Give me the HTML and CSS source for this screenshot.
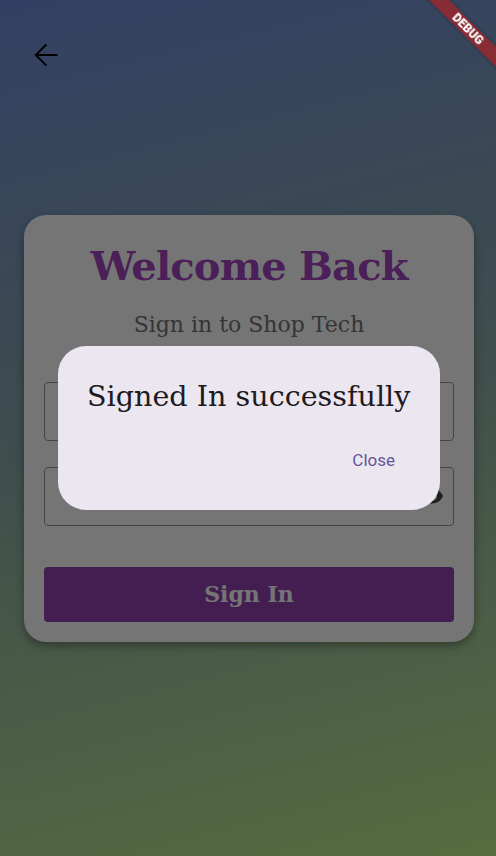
FILE: index.html
```html
<!DOCTYPE html>
<html lang="en">
<head>
<meta charset="utf-8">
<title>Sign In</title>
<link rel="stylesheet" href="styles.css">
</head>
<body>
<div class="screen">
  <header class="appbar">
    <button class="back" aria-label="Back">
      <svg width="24" height="24" viewBox="0 0 24 24" fill="none" stroke="#000" stroke-width="2" stroke-linecap="butt" stroke-linejoin="miter">
        <path d="M1.6 12H23.6"/>
        <path d="M12.4 1.4L1.8 12L12.4 22.6"/>
      </svg>
    </button>
  </header>
  <main class="center">
    <section class="card">
      <h1 class="title">Welcome Back</h1>
      <p class="subtitle">Sign in to Shop Tech</p>
      <div class="field field-email">
        <input class="field-input" type="email" aria-label="Email">
      </div>
      <div class="field field-password">
        <input class="field-input" type="password" aria-label="Password">
        <svg class="eye" width="24" height="24" viewBox="0 0 24 24" fill="#464646">
          <path d="M12 4.5C7 4.5 2.73 7.610 1 12c1.73 4.39 6 7.5 11 7.5s9.27-3.11 11-7.5c-1.73-4.39-6-7.5-11-7.5zM12 17c-2.76 0-5-2.24-5-5s2.24-5 5-5 5 2.24 5 5-2.24 5-5 5zm0-8c-1.66 0-3 1.34-3 3s1.34 3 3 3 3-1.34 3-3-1.34-3-3-3z"/>
        </svg>
      </div>
      <button class="signin">Sign In</button>
    </section>
  </main>
</div>

<div class="barrier">
  <div class="dialog" role="alertdialog">
    <h2 class="dialog-title">Signed In successfully</h2>
    <div class="dialog-actions">
      <button class="text-btn">Close</button>
    </div>
  </div>
</div>

<div class="debug-banner">DEBUG</div>
</body>
</html>
```

FILE: styles.css
```css
html, body {
  margin: 0;
  padding: 0;
}

body {
  width: 496px;
  height: 856px;
  overflow: hidden;
  position: relative;
  font-family: "DejaVu Serif", serif;
}

.screen {
  display: grid;
  height: 856px;
  background: linear-gradient(166deg, #6f8cd8 0%, #8aaaa8 48%, #bdeb8c 100%);
}

.appbar {
  grid-area: 1 / 1;
  align-self: start;
  padding: 43px 0 0 34px;
}

.back {
  display: block;
  width: 24px;
  height: 24px;
  padding: 0;
  margin: 0;
  border: 0;
  background: none;
}

.back svg {
  display: block;
}

.center {
  grid-area: 1 / 1;
  align-self: center;
  padding: 0 22px 0 24px;
}

.card {
  display: flex;
  flex-direction: column;
  background: #ffffff;
  border-radius: 22px;
  padding: 20px;
  box-shadow: 0 4px 10px rgba(0, 0, 0, 0.35);
}

.title {
  margin: 0;
  font-family: "DejaVu Serif", serif;
  font-weight: bold;
  font-size: 40px;
  line-height: 61px;
  letter-spacing: -0.8px;
  text-align: center;
  color: #a446c2;
}

.subtitle {
  margin: 14px 0 0;
  font-size: 22px;
  line-height: 30px;
  text-align: center;
  color: #737373;
}

.field {
  display: flex;
  align-items: center;
  height: 59px;
  box-sizing: border-box;
  border: 1px solid #969696;
  border-radius: 4px;
  padding: 0 9px 0 16px;
}

.field-email {
  margin-top: 42px;
}

.field-password {
  margin-top: 26px;
}

.field-input {
  flex: 1;
  min-width: 0;
  border: 0;
  outline: none;
  background: transparent;
  font-family: "DejaVu Serif", serif;
  font-size: 16px;
}

.eye {
  display: block;
  flex: none;
}

.signin {
  margin-top: 41px;
  height: 55px;
  border: 0;
  border-radius: 4px;
  background: #9443ae;
  color: #ffffff;
  font-family: "DejaVu Serif", serif;
  font-weight: bold;
  font-size: 22px;
  padding: 0;
}

.barrier {
  position: fixed;
  inset: 0;
  background: rgba(0, 0, 0, 0.54);
  display: flex;
  align-items: center;
  justify-content: center;
  z-index: 10;
}

.dialog {
  width: 382px;
  height: 164px;
  box-sizing: border-box;
  margin-left: 2px;
  background: #ece6f0;
  border-radius: 28px;
  padding: 30px 33px 30px 29px;
  display: flex;
  flex-direction: column;
}

.dialog-title {
  margin: 0;
  font-family: "DejaVu Serif", serif;
  font-weight: normal;
  font-size: 28.6px;
  line-height: 40px;
  color: #1d1b20;
  white-space: nowrap;
}

.dialog-actions {
  margin-top: 24px;
  display: flex;
  justify-content: flex-end;
}

.text-btn {
  height: 40px;
  padding: 0 12px;
  border: 0;
  border-radius: 20px;
  background: transparent;
  font-family: Roboto, "Noto Sans", sans-serif;
  font-size: 17px;
  line-height: 40px;
  color: #65559a;
}

.debug-banner {
  position: absolute;
  z-index: 20;
  top: 22px;
  left: 408px;
  width: 120px;
  height: 14px;
  transform: rotate(45deg);
  background: rgba(183, 28, 28, 0.63);
  box-shadow: 0 0 4px rgba(0, 0, 0, 0.3);
  color: #ffffff;
  font-family: Roboto, "Noto Sans", sans-serif;
  font-weight: 900;
  font-size: 12px;
  line-height: 14px;
  text-align: center;
  letter-spacing: 0;
}
```
